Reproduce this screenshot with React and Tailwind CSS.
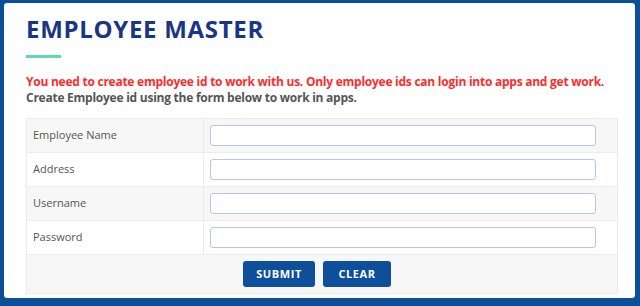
const fields = [
  { label: "Employee Name", type: "text" },
  { label: "Address", type: "text" },
  { label: "Username", type: "text" },
  { label: "Password", type: "password" },
];

export default function App() {
  return (
    <div className="w-[640px] h-[306px] bg-[#0d4f97] pt-[3px] pl-[4px] pr-[5px] pb-[8px] font-['Open_Sans',sans-serif]">
      <div className="h-full bg-white rounded-[3px] px-[22px] pt-[10px]">
        <h1 className="text-[24px] leading-[32px] font-bold text-[#1b3585] tracking-[0.7px]">
          EMPLOYEE MASTER
        </h1>
        <div className="w-[35px] h-[3px] bg-[#5ed8b6] mt-[10px]" />
        <p className="mt-[16px] text-[12px] leading-[16px] font-bold text-[#ff2b2b] tracking-[-0.25px] whitespace-nowrap">
          You need to create employee id to work with us. Only employee ids can login into apps and get work.
        </p>
        <p className="text-[12px] leading-[16px] font-bold text-[#555] tracking-[-0.25px]">
          Create Employee id using the form below to work in apps.
        </p>

        <div className="mt-[12px] w-[592px] border border-[#ececec]">
          {fields.map((f, idx) => (
            <div
              key={f.label}
              className={`grid grid-cols-[177px_1fr] h-[34px] border-b border-[#ececec] ${idx % 2 === 0 ? "bg-[#f7f7f7]" : "bg-white"}`}
            >
              <div className="flex items-center pl-[6px] border-r border-[#ececec] text-[11px] text-[#555]">
                {f.label}
              </div>
              <div className="flex items-center pl-[6px]">
                <input
                  type={f.type}
                  className="w-[386px] h-[21px] rounded-[3px] border border-[#b3c8ea] bg-white outline-none px-2 text-[12px]"
                />
              </div>
            </div>
          ))}
          <div className="h-[38px] bg-[#f7f7f7] flex items-center justify-center gap-[8px] pr-[10px]">
            <button className="w-[72px] h-[26px] rounded-[3px] bg-[#0d4f9b] text-white text-[11px] font-bold tracking-[0.6px]">
              SUBMIT
            </button>
            <button className="w-[68px] h-[26px] rounded-[3px] bg-[#0d4f9b] text-white text-[11px] font-bold tracking-[0.6px]">
              CLEAR
            </button>
          </div>
        </div>
      </div>
    </div>
  );
}
